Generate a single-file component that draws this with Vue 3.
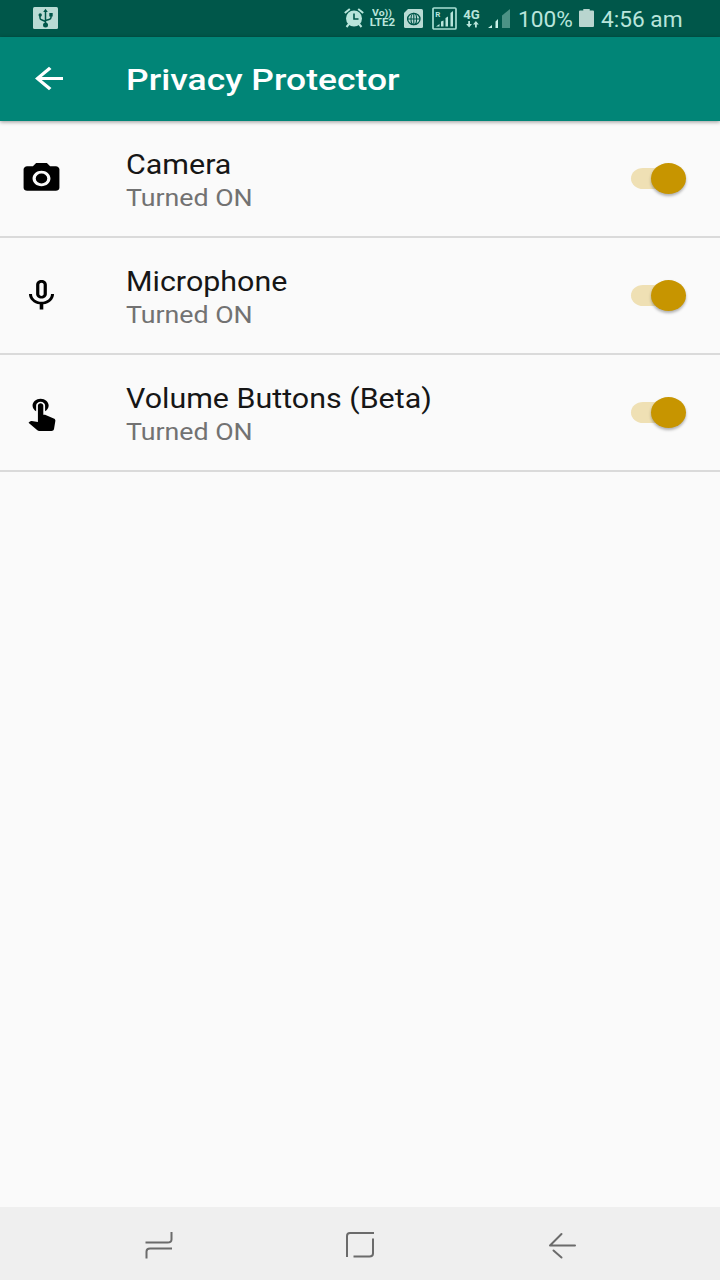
<script setup>
import { reactive } from 'vue'

const settings = reactive([
  { id: 'camera', title: 'Camera', enabled: true },
  { id: 'microphone', title: 'Microphone', enabled: true },
  { id: 'volume', title: 'Volume Buttons (Beta)', enabled: true }
])

const toggle = (item) => {
  item.enabled = !item.enabled
}
</script>

<template>
  <div class="screen">
    <div class="status-bar">
      <svg class="usb" viewBox="0 0 25 22">
        <rect width="25" height="22" rx="1.5" fill="#b9dbd4" />
        <g fill="none" stroke="#00574a" stroke-width="1.5">
          <path d="M12.5 4v14M7 8.500v2.500q0 1.500 2 2l3.500 1.500M18 7.500v3q0 1.500-2 2l-3.500 1" />
        </g>
        <path d="M12.500 1.800l2.300 3.200h-4.600zM16.300 6h3.400v3.400h-3.400z" fill="#00574a" />
        <circle cx="7.200" cy="8" r="1.700" fill="#00574a" />
        <circle cx="12.500" cy="18" r="2.500" fill="#00574a" />
      </svg>
      <div class="status-right">
        <svg class="alarm" viewBox="0 0 20 20">
          <circle cx="10" cy="10.500" r="8" fill="#b9e5db" />
          <path d="M.8 5l5-4M19.200 5l-5-4M5 16l-2.500 3M15 16l2.500 3" stroke="#b9e5db" stroke-width="2" fill="none" />
          <path d="M10 5.500v5.500h4.500" stroke="#00574a" stroke-width="1.600" fill="none" />
        </svg>
        <div class="volte">
          <span>Vo))</span>
          <span class="lte">LTE2</span>
        </div>
        <svg class="globe" viewBox="0 0 19 19">
          <path d="M4 0h13.500q1.500 0 1.500 1.500v16q0 1.500-1.500 1.500h-16q-1.500 0-1.500-1.500v-13.500z" fill="#b9dbd4" />
          <g fill="none" stroke="#00574a" stroke-width="1.300">
            <ellipse cx="9.800" cy="10" rx="6.200" ry="5.700" />
            <ellipse cx="9.800" cy="10" rx="2.800" ry="5.700" stroke-width="1.100" />
            <path d="M3.600 10h12.400M9.800 4.300v11.400" stroke-width="1.100" />
          </g>
        </svg>
        <svg class="roaming" viewBox="0 0 25 23">
          <rect x="1" y="1" width="23" height="21" rx="1" fill="none" stroke="#a9dfd3" stroke-width="1.700" />
          <path d="M4 19.500l3.500-2.500v2.500zM9 14.500l2.500-1v6h-2.500zM13.500 11l2.500-1.500v10h-2.500zM18.500 6l2.500-2v15.500h-2.500z" fill="#b9e5db" />
          <text x="3.300" y="9.800">R</text>
        </svg>
        <div class="network">
          <span>4G</span>
          <svg viewBox="0 0 13 7">
            <path d="M2.200 0h1.800v3h2l-2.900 3.500L.2 3h2zM9 6.500h1.800v-3h2L9.900 0 7 3.500h2z" fill="#b9e5db" />
          </svg>
        </div>
        <svg class="signal" viewBox="0 0 22 19">
          <path d="M14 6.500L22 0v19h-8z" fill="#4c9285" />
          <path d="M0 19l4-3v3zM7.500 12.500l2.500-2.500v9h-2.500z" fill="#c9f2e9" />
        </svg>
        <span class="percent">100%</span>
        <svg class="battery" viewBox="0 0 14 18" preserveAspectRatio="none">
          <path d="M4 0h6v1.500h3q1 0 1 1v14.500q0 1-1 1h-12q-1 0-1-1v-14.500q0-1 1-1h3z" fill="#b9d5cf" />
        </svg>
        <span class="clock">4:56 am</span>
      </div>
    </div>

    <header class="app-bar">
      <svg class="back" viewBox="0 0 24 24" preserveAspectRatio="none">
        <path d="M20 11H7.830l5.590-5.590L12 4l-8 8 8 8 1.410-1.410L7.830 13H20v-2z" />
      </svg>
      <h1>Privacy Protector</h1>
    </header>

    <main class="settings">
      <div v-for="item in settings" :key="item.id" class="row" @click="toggle(item)">
        <svg class="row-icon" viewBox="0 0 24 24" preserveAspectRatio="none">
          <template v-if="item.id === 'camera'">
            <circle cx="12" cy="12" r="3.200" />
            <path d="M9 2L7.170 4H4c-1.100 0-2 .9-2 2v12c0 1.100.9 2 2 2h16c1.100 0 2-.9 2-2V6c0-1.100-.9-2-2-2h-3.170L15 2H9zm3 15c-2.760 0-5-2.240-5-5s2.240-5 5-5 5 2.240 5 5-2.240 5-5 5z" />
          </template>
          <path
            v-else-if="item.id === 'microphone'"
            d="M12 14c1.660 0 2.990-1.340 2.990-3L15 5c0-1.660-1.340-3-3-3S9 3.340 9 5v6c0 1.660 1.340 3 3 3zm-1.200-9.100c0-.66.54-1.200 1.200-1.200s1.200.54 1.200 1.200l-.01 6.200c0 .66-.53 1.200-1.190 1.200s-1.200-.54-1.200-1.200V4.900zm6.500 6.100c0 3-2.540 5.100-5.300 5.100S6.700 14 6.700 11H5c0 3.410 2.720 6.230 6 6.720V21h2v-3.280c3.280-.48 6-3.300 6-6.720h-1.700z"
          />
          <path
            v-else
            d="M9 11.240V7.500C9 6.120 10.120 5 11.500 5S14 6.120 14 7.500v3.740c1.210-.81 2-2.180 2-3.740C16 5.010 13.990 3 11.500 3S7 5.010 7 7.500c0 1.560.79 2.930 2 3.740zm9.840 4.630l-4.540-2.260c-.17-.07-.35-.11-.54-.11H13v-6c0-.83-.67-1.500-1.500-1.500S10 6.670 10 7.500v10.740l-3.430-.72c-.08-.01-.15-.03-.24-.03-.31 0-.59.13-.79.33l-.79.8 4.940 4.940c.27.27.65.44 1.060.44h6.790c.75 0 1.330-.55 1.440-1.280l.75-5.270c.01-.07.02-.14.02-.2 0-.62-.38-1.160-.91-1.380z"
          />
        </svg>
        <div class="row-text">
          <span class="title">{{ item.title }}</span>
          <span class="summary">{{ item.enabled ? 'Turned ON' : 'Turned OFF' }}</span>
        </div>
        <div class="switch" :class="{ on: item.enabled }">
          <div class="thumb"></div>
        </div>
      </div>
    </main>

    <nav class="nav-bar">
      <svg class="recents" viewBox="0 0 28 28">
        <path d="M.5 11.500h22q4 0 4-3v-7.500M27 17.500h-22q-3.500 0-3.500 3v7" />
      </svg>
      <svg class="home" viewBox="0 0 30 28">
        <path d="M2 26V5q0-3 3-3h24M8.500 25.500h16q3.500 0 3.500-3v-15" />
      </svg>
      <svg class="nav-back" viewBox="0 0 28 28">
        <path d="M27 14.500H2L13.500 3M5.500 19.500l8 7" stroke-linecap="round" stroke-linejoin="round" />
      </svg>
    </nav>
  </div>
</template>

<style>
body {
  margin: 0;
}
</style>

<style scoped>
.screen {
  width: 720px;
  height: 1280px;
  display: flex;
  flex-direction: column;
  background: #fafafa;
  font-family: Roboto, "Noto Sans", sans-serif;
  overflow: hidden;
}
svg {
  display: block;
  flex: none;
}
span,
h1 {
  white-space: nowrap;
}
.status-bar {
  height: 37px;
  box-sizing: border-box;
  flex: none;
  display: flex;
  align-items: center;
  justify-content: space-between;
  padding: 0 38px 1px 33px;
  background: #00574a;
  color: #b9e5db;
}
.usb {
  width: 25px;
  height: 22px;
}
.status-right {
  display: flex;
  align-items: center;
}
.alarm {
  width: 20px;
  height: 20px;
  margin-right: 4px;
}
.volte {
  width: 28px;
  margin-right: 8px;
  display: flex;
  flex-direction: column;
  align-items: center;
  font-size: 9.500px;
  font-weight: 700;
  line-height: 10px;
}
.volte span {
  transform: scaleX(1.1);
}
.volte .lte {
  font-size: 10.500px;
  line-height: 10px;
}
.globe {
  width: 19px;
  height: 19px;
  margin-right: 9px;
}
.roaming {
  width: 25px;
  height: 23px;
  margin-right: 6px;
}
.roaming text {
  font-size: 8px;
  font-weight: 700;
  fill: #b9e5db;
}
.network {
  width: 18px;
  margin-right: 7px;
  display: flex;
  flex-direction: column;
  align-items: center;
  font-size: 12px;
  font-weight: 700;
  line-height: 12px;
}
.network span {
  transform: scaleX(1.1);
}
.network svg {
  width: 13px;
  height: 7px;
}
.signal {
  width: 22px;
  height: 19px;
  margin-right: 8px;
}
.percent,
.clock {
  font-size: 22.700px;
  line-height: 28px;
  padding-top: 3px;
}
.percent {
  width: 54px;
  margin-right: 7px;
}
.battery {
  width: 15px;
  height: 18px;
  margin-right: 7px;
}
.clock {
  width: 81px;
}
.app-bar {
  position: relative;
  height: 84px;
  flex: none;
  display: flex;
  align-items: center;
  padding-left: 28px;
  background: #018577;
  color: #fff;
  box-shadow: 0 1px 4px rgba(0, 0, 0, 0.4);
}
.back {
  width: 42px;
  height: 35px;
  margin-bottom: 1px;
  fill: #fff;
}
h1 {
  margin: 2px 0 0 56px;
  font-size: 30px;
  font-weight: 500;
  line-height: 40px;
  transform: scaleX(1.182);
  transform-origin: left;
}
.settings {
  flex: 1;
}
.row {
  height: 117px;
  box-sizing: border-box;
  display: flex;
  align-items: center;
  padding: 0 34px 0 20px;
  border-bottom: 2px solid #dadada;
}
.row-icon {
  width: 43px;
  height: 37px;
}
.row-text {
  flex: 1;
  margin: 5px 0 0 63px;
  display: flex;
  flex-direction: column;
  align-items: flex-start;
}
.title {
  font-size: 26.800px;
  line-height: 34px;
  color: #161616;
  transform: scaleX(1.135);
  transform-origin: left;
}
.summary {
  font-size: 23.300px;
  line-height: 33px;
  color: #727272;
  transform: scaleX(1.148);
  transform-origin: left;
}
.switch {
  width: 55px;
  height: 31px;
  display: flex;
  align-items: center;
}
.switch::before {
  content: "";
  width: 50px;
  height: 21px;
  flex: none;
  border-radius: 12px / 10.5px;
  background: #c8c8c8;
}
.thumb {
  width: 35px;
  height: 31px;
  flex: none;
  margin-left: -50px;
  border-radius: 50%;
  background: #f1f1f1;
  box-shadow: 0 2px 3px rgba(0, 0, 0, 0.3);
}
.switch.on::before {
  background: #efe0b4;
}
.switch.on .thumb {
  margin-left: -30px;
  background: #c79500;
}
.nav-bar {
  height: 73px;
  flex: none;
  box-sizing: border-box;
  display: flex;
  align-items: center;
  padding: 3px 0 0 145px;
  background: #efefef;
}
.nav-bar path {
  fill: none;
  stroke: #6b6b6b;
  stroke-width: 2;
}
.recents {
  width: 28px;
  height: 28px;
}
.home {
  width: 30px;
  height: 28px;
  margin-left: 172px;
}
.nav-back {
  width: 28px;
  height: 28px;
  margin-left: 173px;
}
</style>
